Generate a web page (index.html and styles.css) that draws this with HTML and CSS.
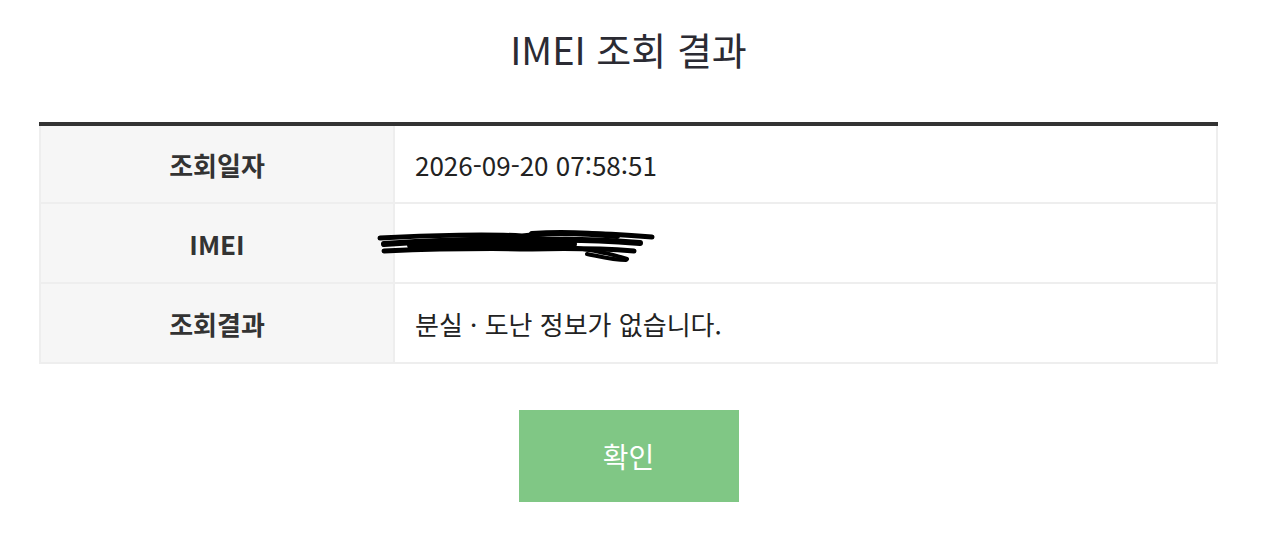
FILE: index.html
```html
<!DOCTYPE html>
<html lang="ko">
<head>
    <meta charset="UTF-8">
    <meta name="viewport" content="width=device-width, initial-scale=1.0">
    <title>IMEI 조회 결과</title>
    <link rel="stylesheet" href="styles.css">
</head>
<body>
    <div class="result-wrap">
        <h1 class="result-title">IMEI 조회 결과</h1>

        <table class="result-table">
            <tr>
                <th>조회일자</th>
                <td>2026-09-20 07:58:51</td>
            </tr>
            <tr>
                <th>IMEI</th>
                <td class="masked">
                    <svg class="scribble" width="290" height="44" viewBox="0 0 290 44">
                        <g fill="none" stroke="#000" stroke-linecap="round" stroke-linejoin="round">
                            <path d="M8 15 C60 12 120 11 150 13 C190 9 230 10 280 14" stroke-width="5"/>
                            <path d="M12 21 C70 17 130 16 180 17 C210 16 240 18 268 20" stroke-width="6"/>
                            <path d="M12 28 C60 26 110 25 160 26 C200 25 235 26 262 28" stroke-width="5"/>
                            <path d="M40 22 C90 19 150 18 200 21" stroke-width="10"/>
                            <path d="M160 11 C190 9 215 10 245 13" stroke-width="6"/>
                            <path d="M205 25 C225 28 240 31 255 36" stroke-width="4"/>
                            <path d="M215 31 C230 34 242 37 254 37" stroke-width="4"/>
                        </g>
                    </svg>
                </td>
            </tr>
            <tr>
                <th>조회결과</th>
                <td>분실 · 도난 정보가 없습니다.</td>
            </tr>
        </table>

        <div class="btn-area">
            <button class="confirm-btn">확인</button>
        </div>
    </div>
</body>
</html>
```

FILE: styles.css
```css
* {
    margin: 0;
    padding: 0;
    box-sizing: border-box;
}

body {
    font-family: "Noto Sans CJK KR", "Noto Sans", sans-serif;
    background: #fff;
    color: #222;
}

.result-wrap {
    width: 1179px;
    margin-left: 39px;
    padding-top: 22px;
}

.result-title {
    text-align: center;
    font-size: 38px;
    font-weight: 400;
    color: #2b2b33;
    line-height: 54px;
    margin-bottom: 46px;
}

.result-table {
    width: 100%;
    border-collapse: collapse;
    border-top: 4px solid #333;
}

.result-table th,
.result-table td {
    height: 80px;
    border: 2px solid #eee;
    border-top: none;
    font-size: 26px;
    vertical-align: middle;
}

.result-table tr:first-child th,
.result-table tr:first-child td {
    height: 79px;
}

.result-table th {
    width: 354px;
    background: #f6f6f6;
    font-weight: 700;
    color: #333;
    text-align: center;
}

.result-table td {
    padding-left: 20px;
    color: #222;
    font-weight: 400;
}

.masked {
    line-height: 0;
}

.scribble {
    display: block;
    margin-left: -43px;
    margin-top: 4px;
}

.btn-area {
    display: flex;
    justify-content: center;
    margin-top: 46px;
}

.confirm-btn {
    width: 220px;
    height: 92px;
    background: #80c785;
    color: #fff;
    border: none;
    font-family: inherit;
    font-size: 28px;
    cursor: pointer;
}
```
